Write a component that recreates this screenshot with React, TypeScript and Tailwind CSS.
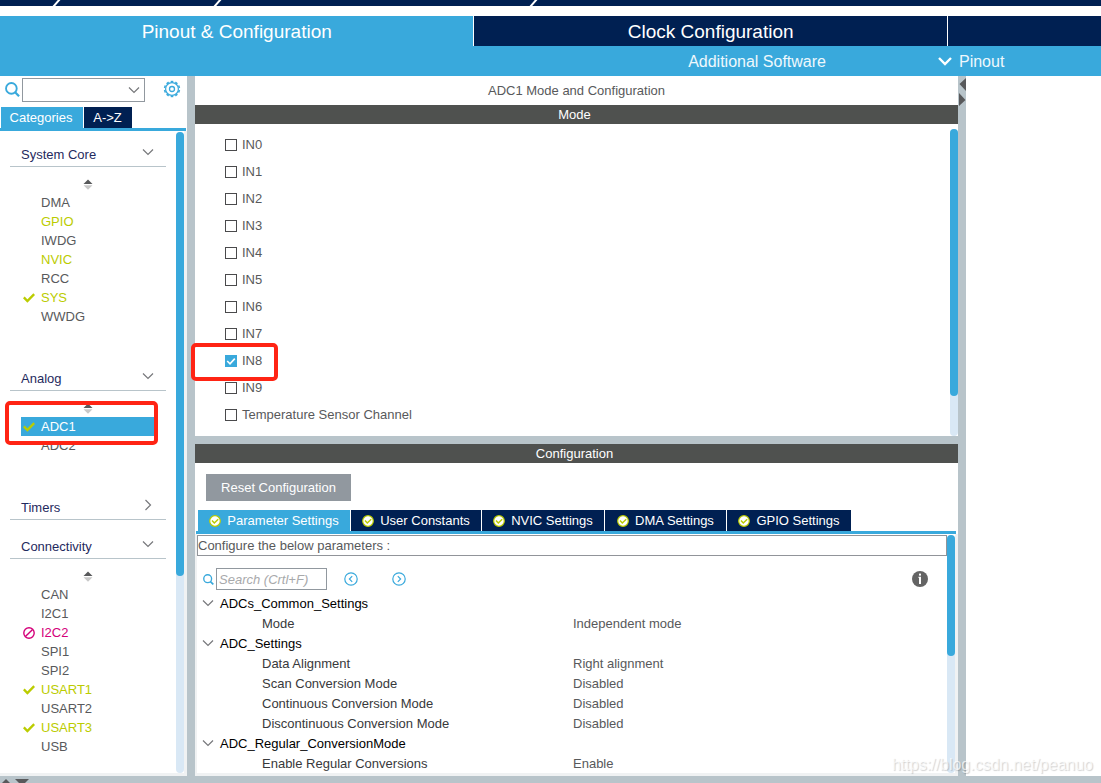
import { useState } from "react";

type Status = "ok" | "conflict";

interface Peripheral {
  name: string;
  tone?: "active" | "conflict";
  status?: Status;
  selected?: boolean;
  marked?: boolean;
}

interface Category {
  name: string;
  open: boolean;
  items: Peripheral[];
}

const CATEGORIES: Category[] = [
  {
    name: "System Core",
    open: true,
    items: [
      { name: "DMA" },
      { name: "GPIO", tone: "active" },
      { name: "IWDG" },
      { name: "NVIC", tone: "active" },
      { name: "RCC" },
      { name: "SYS", tone: "active", status: "ok" },
      { name: "WWDG" },
    ],
  },
  {
    name: "Analog",
    open: true,
    items: [{ name: "ADC1", status: "ok", selected: true, marked: true }, { name: "ADC2" }],
  },
  { name: "Timers", open: false, items: [] },
  {
    name: "Connectivity",
    open: true,
    items: [
      { name: "CAN" },
      { name: "I2C1" },
      { name: "I2C2", tone: "conflict", status: "conflict" },
      { name: "SPI1" },
      { name: "SPI2" },
      { name: "USART1", tone: "active", status: "ok" },
      { name: "USART2" },
      { name: "USART3", tone: "active", status: "ok" },
      { name: "USB" },
    ],
  },
];

const CHANNELS = [
  "IN0",
  "IN1",
  "IN2",
  "IN3",
  "IN4",
  "IN5",
  "IN6",
  "IN7",
  "IN8",
  "IN9",
  "Temperature Sensor Channel",
];

const SETTINGS_TABS = [
  { name: "Parameter Settings", width: "w-[152px]" },
  { name: "User Constants", width: "w-[130px]" },
  { name: "NVIC Settings", width: "w-[122px]" },
  { name: "DMA Settings", width: "w-[121px]" },
  { name: "GPIO Settings", width: "w-[124px]" },
];

const PARAMETERS = [
  { group: "ADCs_Common_Settings", rows: [["Mode", "Independent mode"]] },
  {
    group: "ADC_Settings",
    rows: [
      ["Data Alignment", "Right alignment"],
      ["Scan Conversion Mode", "Disabled"],
      ["Continuous Conversion Mode", "Disabled"],
      ["Discontinuous Conversion Mode", "Disabled"],
    ],
  },
  { group: "ADC_Regular_ConversionMode", rows: [["Enable Regular Conversions", "Enable"]] },
];

function Chevron({ className }: { className: string }) {
  return (
    <svg viewBox="0 0 12 8" className={className} fill="none" stroke="currentColor" strokeWidth="1.2" aria-hidden="true">
      <path d="M1 1.5 L6 6.5 L11 1.5" />
    </svg>
  );
}

function SearchIcon({ className }: { className: string }) {
  return (
    <svg viewBox="0 0 16 16" className={className} fill="none" stroke="currentColor" aria-hidden="true">
      <circle cx="6.8" cy="6.8" r="5.7" strokeWidth="2" />
      <path d="M10.8 11 L15 15.2" strokeWidth="2.4" />
    </svg>
  );
}

function GearIcon() {
  const teeth = [0, 36, 72, 108, 144, 180, 216, 252, 288, 324];
  return (
    <svg viewBox="0 0 18 18" className="size-[18px]" fill="none" stroke="#39a9dc" aria-hidden="true">
      <circle cx="9" cy="9" r="6.4" strokeWidth="1.2" />
      <circle cx="9" cy="9" r="2.5" strokeWidth="1.3" />
      {teeth.map((angle) => (
        <path key={angle} d="M7.7 1.6 H10.3" strokeWidth="1.6" transform={`rotate(${angle} 9 9)`} />
      ))}
    </svg>
  );
}

function StatusIcon({ status }: { status?: Status }) {
  if (status === "ok") {
    return (
      <svg viewBox="0 0 12 10" className="h-[10px] w-3" fill="none" stroke="#bbcc00" strokeWidth="2.4" aria-hidden="true">
        <path d="M0.8 4.4 L4.4 8 L11.2 1.2" />
      </svg>
    );
  }
  if (status === "conflict") {
    return (
      <svg viewBox="0 0 12 12" className="size-3" fill="none" stroke="#d4007a" strokeWidth="1.4" aria-hidden="true">
        <circle cx="6" cy="6" r="5.2" />
        <path d="M2.4 9.6 L9.6 2.4" />
      </svg>
    );
  }
  return <span className="w-3" />;
}

function TabCheck() {
  return (
    <svg viewBox="0 0 12 12" className="size-3 shrink-0" fill="none" aria-hidden="true">
      <circle cx="6" cy="6" r="5.3" fill="#fff" stroke="#bbcc00" strokeWidth="1.2" />
      <path d="M3 5.6 L5.3 8 L9.2 4.2" stroke="#bbcc00" strokeWidth="1.5" />
    </svg>
  );
}

function CircleArrow({ flip, label }: { flip?: boolean; label: string }) {
  return (
    <button type="button" aria-label={label}>
      <svg viewBox="0 0 14 14" className="size-[14px]" fill="none" stroke="#39a9dc" strokeWidth="1.2" aria-hidden="true">
        <circle cx="7" cy="7" r="6.2" />
        <path d={flip ? "M5.8 4.2 L8.6 7 L5.8 9.8" : "M8.2 4.2 L5.4 7 L8.2 9.8"} />
      </svg>
    </button>
  );
}

function Highlight({ className }: { className: string }) {
  return <span className={`pointer-events-none absolute z-10 rounded-[5px] border-4 border-[#ff2414] ${className}`} />;
}

function TopBar() {
  return (
    <div className="h-[6px] shrink-0 bg-[#002052]">
      <svg viewBox="0 0 1101 6" className="block h-full w-full" stroke="#fff" strokeWidth="2" aria-hidden="true">
        <path d="M53 7 L60 -1 M214 7 L221 -1 M530 7 L537 -1" />
      </svg>
    </div>
  );
}

function Header() {
  return (
    <header className="shrink-0 pt-[10px]">
      <nav className="grid h-[30px] grid-cols-[43fr_43fr_14fr] text-[19px] text-white">
        <button type="button" className="bg-[#39a9dc]">
          Pinout &amp; Configuration
        </button>
        <button type="button" className="border-l border-white bg-[#002052]">
          Clock Configuration
        </button>
        <span className="border-l border-white bg-[#002052]" />
      </nav>
      <div className="flex h-[30px] items-center gap-[112px] bg-[#39a9dc] pl-[62.5%] text-[16px] text-[#eef8fd]">
        <button type="button" className="whitespace-nowrap">
          Additional Software
        </button>
        <button type="button" className="flex items-center gap-[7px]">
          <svg viewBox="0 0 14 9" className="h-[9px] w-[14px] text-white" fill="none" stroke="currentColor" strokeWidth="2.4" aria-hidden="true">
            <path d="M1 1 L7 7 L13 1" />
          </svg>
          Pinout
        </button>
      </div>
    </header>
  );
}

function SortArrows() {
  return (
    <div className="flex h-[26px] w-[175px] justify-center pt-3">
      <svg viewBox="0 0 10 11" className="h-[11px] w-[10px]" aria-hidden="true">
        <path d="M0.5 5 L5 0.5 L9.5 5 Z" fill="#58595b" />
        <path d="M0.5 6.2 L5 10.7 L9.5 6.2 Z" fill="#c8c8c8" />
      </svg>
    </div>
  );
}

function PeripheralRow({ item }: { item: Peripheral }) {
  const color = item.selected
    ? "bg-[#39a9dc] text-white"
    : item.tone === "active"
      ? "text-[#bbcc00]"
      : item.tone === "conflict"
        ? "text-[#d4007a]"
        : "text-[#58595b]";
  return (
    <li className="relative mx-[21px] h-[19px]">
      <button type="button" className={`flex h-full w-full items-center gap-[6px] pl-[2px] text-left ${color}`}>
        <StatusIcon status={item.status} />
        {item.name}
      </button>
      {item.marked && <Highlight className="-top-4 -right-[3px] -bottom-[9px] -left-4" />}
    </li>
  );
}

function Sidebar() {
  return (
    <aside className="flex min-h-0 flex-col">
      <div className="flex h-[31px] shrink-0 items-start pt-[2px] pl-[5px]">
        <SearchIcon className="mt-1 mr-[2px] size-[15px] text-[#39a9dc]" />
        <div className="relative">
          <select
            aria-label="Search peripherals"
            className="h-6 w-[123px] appearance-none border border-[#91989f] bg-white px-1 outline-none"
          >
            <option value=""></option>
          </select>
          <Chevron className="pointer-events-none absolute top-2 right-[5px] h-2 w-3 text-[#77787b]" />
        </div>
        <button type="button" aria-label="Options" className="mt-[2px] ml-[18px]">
          <GearIcon />
        </button>
      </div>
      <div className="flex h-[21px] shrink-0 gap-px pl-px text-white">
        <button type="button" className="w-[82px] bg-[#39a9dc] pr-[2px]">
          Categories
        </button>
        <button type="button" className="w-12 bg-[#002052] pr-px">
          A-&gt;Z
        </button>
      </div>
      <div className="mr-px h-[3px] shrink-0 bg-[#39a9dc]" />
      <div className="flex min-h-0 flex-1 border-r-[3px] border-b-[3px] border-[#f0f2f3]">
        <div className="flex min-w-0 flex-1 flex-col gap-[3px] overflow-hidden">
          {CATEGORIES.map((category) => (
            <section key={category.name} className="shrink-0">
              <h3 className="mx-[10px] border-b border-[#b8c4ca]">
                <button
                  type="button"
                  aria-expanded={category.open}
                  className="flex h-[35px] w-full items-end justify-between pr-3 pb-[2px] pl-[11px] text-[#1f2a5e]"
                >
                  {category.name}
                  <Chevron className={`mb-2 h-2 w-3 text-[#77787b] ${category.open ? "" : "-rotate-90"}`} />
                </button>
              </h3>
              {category.open && (
                <>
                  <SortArrows />
                  <ul className="pb-[26px]">
                    {category.items.map((item) => (
                      <PeripheralRow key={item.name} item={item} />
                    ))}
                  </ul>
                </>
              )}
            </section>
          ))}
        </div>
        <div className="mt-px w-2 rounded-full bg-[#d9e8f5]">
          <div className="h-9/13 rounded-full bg-[#39a9dc]" />
        </div>
      </div>
    </aside>
  );
}

function SectionBar({ title }: { title: string }) {
  return <h2 className="h-[19px] shrink-0 bg-[#4f514f] pr-1 text-center leading-[19px] text-white">{title}</h2>;
}

function ModePanel() {
  const [checked, setChecked] = useState<string[]>(["IN8"]);
  const toggle = (name: string) =>
    setChecked((list) => (list.includes(name) ? list.filter((entry) => entry !== name) : [...list, name]));
  return (
    <section className="shrink-0">
      <SectionBar title="Mode" />
      <div className="flex">
        <ul className="flex-1 pt-[7px] pb-2 pl-[30px]">
          {CHANNELS.map((name) => (
            <li key={name} className="relative h-[27px]">
              <label className="inline-flex h-full items-center gap-[5px] text-[#58595b]">
                <span className="relative size-3">
                  <input
                    type="checkbox"
                    checked={checked.includes(name)}
                    onChange={() => toggle(name)}
                    className="block size-3 appearance-none border border-[#4a4a4c] bg-white checked:border-[#39a9dc] checked:bg-[#39a9dc]"
                  />
                  {checked.includes(name) && (
                    <svg
                      viewBox="0 0 12 12"
                      className="pointer-events-none absolute inset-0"
                      fill="none"
                      stroke="#fff"
                      strokeWidth="1.6"
                      aria-hidden="true"
                    >
                      <path d="M2.2 6 L5 8.8 L9.8 3.6" />
                    </svg>
                  )}
                </span>
                {name}
              </label>
              {name === "IN8" && <Highlight className="-top-1 -left-[34px] h-[38px] w-[87px]" />}
            </li>
          ))}
        </ul>
        <div className="mt-[5px] w-2 rounded-full bg-[#d9e8f5]">
          <div className="h-[87%] rounded-full bg-[#39a9dc]" />
        </div>
      </div>
    </section>
  );
}

function ParameterTable() {
  return (
    <table className="w-full table-fixed border-collapse text-left">
      <colgroup>
        <col className="w-1/2" />
        <col />
      </colgroup>
      {PARAMETERS.map(({ group, rows }) => (
        <tbody key={group}>
          <tr className="h-5">
            <th colSpan={2} className="p-0 font-normal text-black">
              <button type="button" aria-expanded="true" className="flex items-center gap-[6px] pl-[5px]">
                <Chevron className="h-2 w-3 text-[#77787b]" />
                {group}
              </button>
            </th>
          </tr>
          {rows.map(([label, value]) => (
            <tr key={label} className="h-5">
              <th className="p-0 pl-[65px] font-normal text-[#38393b]">{label}</th>
              <td className="p-0 pl-px text-[#58595b]">{value}</td>
            </tr>
          ))}
        </tbody>
      ))}
    </table>
  );
}

function ConfigurationPanel() {
  return (
    <section className="flex min-h-0 flex-1 flex-col">
      <SectionBar title="Configuration" />
      <div className="px-[11px] pt-[11px] pb-[9px]">
        <button type="button" className="h-[27px] w-[145px] bg-[#91989f] text-white">
          Reset Configuration
        </button>
      </div>
      <div className="flex h-[21px] shrink-0 gap-px pl-[3px] text-white">
        {SETTINGS_TABS.map((tab, index) => (
          <button
            key={tab.name}
            type="button"
            className={`flex items-center justify-center gap-[6px] whitespace-nowrap ${tab.width} ${index === 0 ? "bg-[#39a9dc]" : "bg-[#002052]"}`}
          >
            <TabCheck />
            {tab.name}
          </button>
        ))}
      </div>
      <div className="mr-[2px] ml-px h-[3px] shrink-0 bg-[#39a9dc]" />
      <div className="flex min-h-0 flex-1 border-r-[3px] border-b-[3px] border-l-2 border-[#f0f2f3] pt-px">
        <div className="min-w-0 flex-1 overflow-hidden">
          <p className="h-[21px] border border-[#919499] leading-[19px] text-[#58595b]">Configure the below parameters :</p>
          <div className="flex h-[37px] items-center pt-[9px] pr-[19px] pl-[6px]">
            <SearchIcon className="mr-[2px] size-[11px] text-[#39a9dc]" />
            <input
              type="text"
              aria-label="Search parameters"
              placeholder="Search (Crtl+F)"
              className="mr-[17px] h-[22px] w-[111px] border border-[#91989f] px-[2px] italic outline-none placeholder:text-[#a8a9ab]"
            />
            <div className="flex gap-[34px]">
              <CircleArrow label="Previous result" />
              <CircleArrow flip label="Next result" />
            </div>
            <button type="button" aria-label="Information" className="ml-auto">
              <svg viewBox="0 0 16 16" className="size-4" aria-hidden="true">
                <circle cx="8" cy="8" r="8" fill="#646464" />
                <rect x="7" y="2.6" width="2" height="2" fill="#fff" />
                <path d="M6.5 5.8 H9 V13 H7 V7 H6.5 Z" fill="#fff" />
              </svg>
            </button>
          </div>
          <ParameterTable />
        </div>
        <div className="w-2 rounded-full bg-[#d9e8f5]">
          <div className="h-[51%] rounded-full bg-[#39a9dc]" />
        </div>
      </div>
    </section>
  );
}

export default function App() {
  return (
    <div className="relative flex h-screen flex-col overflow-hidden bg-white font-['Liberation_Sans',Arial,sans-serif] text-[13px] leading-[19px]">
      <TopBar />
      <Header />
      <div className="grid min-h-0 flex-1 grid-cols-[187px_8px_minmax(0,763fr)_8px_minmax(0,135fr)] grid-rows-[minmax(0,1fr)]">
        <Sidebar />
        <div className="bg-[#b8c4ca]" />
        <main className="flex min-h-0 flex-col">
          <h1 className="h-[29px] shrink-0 text-center leading-[29px] text-[#58595b]">ADC1 Mode and Configuration</h1>
          <ModePanel />
          <div className="h-2 shrink-0 bg-[#b8c4ca]" />
          <ConfigurationPanel />
        </main>
        <div className="bg-[#b8c4ca] pt-[2px]">
          <svg viewBox="0 0 8 28" className="h-7 w-2" fill="#58595b" aria-hidden="true">
            <path d="M8 0 L1.5 6 L8 13 Z M1 15 L7.5 22 L1 28 Z" />
          </svg>
        </div>
        <div />
      </div>
      <footer className="h-[7px] shrink-0 overflow-hidden bg-[#b8c4ca] pt-[3px]">
        <svg viewBox="0 0 30 4" className="block h-1 w-[30px]" fill="#58595b" aria-hidden="true">
          <path d="M2 4 L6 0 L10 4 Z M15 0 H29 L25 4 H19 Z" />
        </svg>
      </footer>
      <a
        href="https://blog.csdn.net/peanuo"
        className="absolute right-2 bottom-[9px] text-[16px] text-white/70 [text-shadow:1px_1px_1px_rgba(0,0,0,0.18)]"
      >
        https://blog.csdn.net/peanuo
      </a>
    </div>
  );
}
